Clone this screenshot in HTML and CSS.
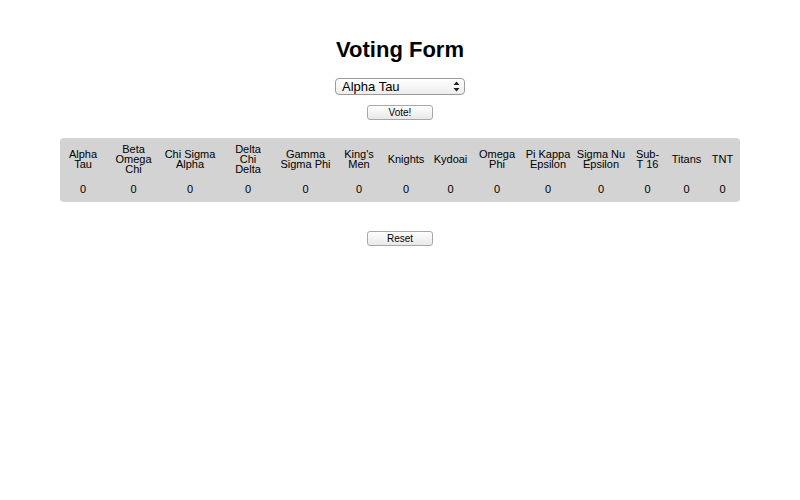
FILE: index.html
```html
<!DOCTYPE html>
<html>
<head>
<meta charset="utf-8">
<link rel="stylesheet" href="styles.css">
</head>
<body>
<div class="page">
  <h1 class="title">Voting Form</h1>
  <div class="select">
    <span class="select-text">Alpha Tau</span>
    <svg class="arrows" width="7" height="11" viewBox="0 0 7 11"><path d="M3.5 0.5 L6.5 4 L0.5 4 Z M3.5 10.5 L6.5 7 L0.5 7 Z" fill="#222"/></svg>
  </div>
  <div class="btn">Vote!</div>
  <table class="tally">
    <colgroup>
      <col class="c1"><col class="c2"><col class="c3"><col class="c4"><col class="c5"><col class="c6"><col class="c7">
      <col class="c8"><col class="c9"><col class="c10"><col class="c11"><col class="c12"><col class="c13"><col class="c14">
    </colgroup>
    <tr class="names">
      <td>Alpha<br>Tau</td>
      <td>Beta<br>Omega<br>Chi</td>
      <td>Chi Sigma<br>Alpha</td>
      <td>Delta<br>Chi<br>Delta</td>
      <td>Gamma<br>Sigma Phi</td>
      <td>King's<br>Men</td>
      <td>Knights</td>
      <td>Kydoai</td>
      <td>Omega<br>Phi</td>
      <td>Pi Kappa<br>Epsilon</td>
      <td>Sigma Nu<br>Epsilon</td>
      <td>Sub-<br>T 16</td>
      <td>Titans</td>
      <td>TNT</td>
    </tr>
    <tr class="counts">
      <td>0</td><td>0</td><td>0</td><td>0</td><td>0</td><td>0</td><td>0</td>
      <td>0</td><td>0</td><td>0</td><td>0</td><td>0</td><td>0</td><td>0</td>
    </tr>
  </table>
  <div class="btn reset">Reset</div>
</div>
</body>
</html>
```
FILE: styles.css
```css
html, body {
  margin: 0;
  padding: 0;
  background: #fff;
}
body {
  font-family: "Liberation Sans", Arial, sans-serif;
  color: #000;
}
.page {
  display: flex;
  flex-direction: column;
  align-items: center;
  padding-top: 36px;
}
.title {
  margin: 0;
  font-size: 22px;
  font-weight: bold;
  line-height: 28px;
}
.select {
  margin-top: 14px;
  width: 130px;
  height: 17px;
  box-sizing: border-box;
  border: 1px solid #9a9a9a;
  border-radius: 4px;
  background: linear-gradient(#ffffff, #ececec);
  display: flex;
  align-items: center;
  justify-content: space-between;
  padding: 0 4px 0 6px;
}
.select-text {
  font-size: 13px;
  line-height: 15px;
}
.arrows {
  display: block;
}
.btn {
  margin-top: 10px;
  width: 66px;
  height: 15px;
  box-sizing: border-box;
  border: 1px solid #a8a8a8;
  border-radius: 3px;
  background: linear-gradient(#ffffff, #e8e8e8);
  font-size: 10px;
  line-height: 13px;
  text-align: center;
}
.tally {
  margin-top: 18px;
  width: 680px;
  table-layout: fixed;
  background: #d3d3d3;
  border-radius: 4px;
  border-collapse: separate;
  border-spacing: 0;
  padding: 4px 0 2px;
  font-size: 11px;
}
.c1 { width: 46px; }
.c2 { width: 55px; }
.c3 { width: 58px; }
.c4 { width: 58px; }
.c5 { width: 57px; }
.c6 { width: 50px; }
.c7 { width: 44px; }
.c8 { width: 45px; }
.c9 { width: 48px; }
.c10 { width: 54px; }
.c11 { width: 52px; }
.c12 { width: 41px; }
.c13 { width: 37px; }
.c14 { width: 35px; }
.tally td {
  text-align: center;
  vertical-align: middle;
  padding: 0 1px;
}
.names td {
  line-height: 10px;
  padding-top: 2px;
  padding-bottom: 4px;
}
.counts td {
  line-height: 13px;
  padding-top: 5px;
  padding-bottom: 4px;
}
.reset {
  margin-top: 29px;
}
```
